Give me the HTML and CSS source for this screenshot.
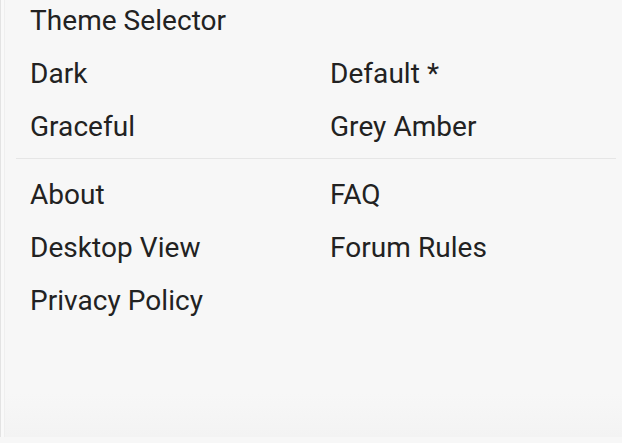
FILE: index.html
```html
<!DOCTYPE html>
<html lang="en">

<head>
  <meta charset="UTF-8">
  <title>Menu</title>
  <link rel="stylesheet" href="styles.css">
</head>

<body>
  <div class="panel">
    <div class="section">
      <div class="title">Theme Selector</div>
      <div class="grid">
        <a class="item">Dark</a>
        <a class="item">Default *</a>
        <a class="item">Graceful</a>
        <a class="item">Grey Amber</a>
      </div>
    </div>
    <hr class="divider">
    <div class="section">
      <div class="grid">
        <a class="item">About</a>
        <a class="item">FAQ</a>
        <a class="item">Desktop View</a>
        <a class="item">Forum Rules</a>
        <a class="item">Privacy Policy</a>
      </div>
    </div>
  </div>
</body>

</html>
```

FILE: styles.css
```css
html,
body {
  margin: 0;
  height: 100%;
}
body {
  background: #f7f7f7;
  font-family: Roboto, "Liberation Sans", sans-serif;
  color: #222;
  overflow: hidden;
}
.panel {
  height: 100%;
  box-sizing: border-box;
  border-left: 1px solid #e3e3e3;
  box-shadow: inset 3px 0 0 #f9f9f9, inset 4px 0 0 #efefef;
  background: linear-gradient(to bottom, #f7f7f7 0, #f7f7f7 400px, #f3f3f3 100%);
  padding: 0 6px 0 15px;
  margin-top: -6px;
}
.title,
.item {
  display: block;
  font-size: 28px;
  letter-spacing: 0.05px;
  line-height: 53px;
  padding-left: 14px;
}
.grid {
  display: grid;
  grid-template-columns: 300px 300px;
}
.divider {
  border: 0;
  border-top: 1px solid #e6e6e6;
  margin: 5px 0 9px 0;
}
```
